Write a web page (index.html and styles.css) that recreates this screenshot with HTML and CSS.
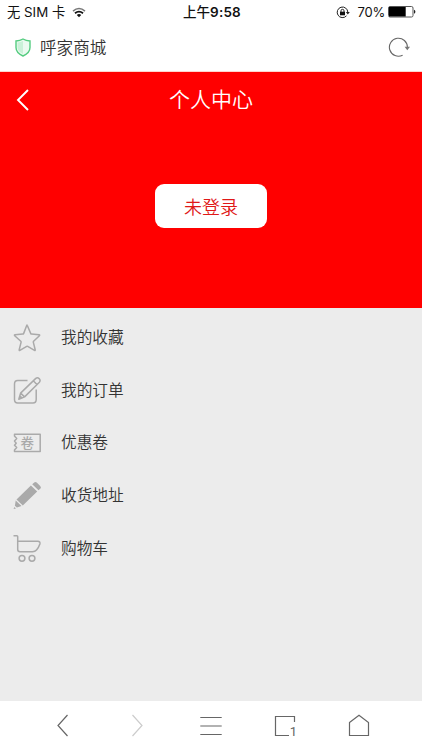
FILE: index.html
```html
<!DOCTYPE html>
<html lang="zh-CN">
<head>
<meta charset="utf-8">
<title>个人中心</title>
<link rel="stylesheet" href="styles.css">
</head>
<body>
<div class="screen">
  <header class="status">
    <div class="carrier"><span>无 SIM 卡</span>
      <svg width="14" height="11" viewBox="0 0 14 11" fill="none" stroke="#111"><path d="M1 4.1Q7-1 13 4.1" stroke="#777" stroke-width="1.5"/><path d="M3 6.3Q7 2.9 11 6.3" stroke-width="1.8"/><path d="M4.8 8Q7 6.2 9.2 8L7 10.3Z" fill="#111" stroke="none"/></svg>
    </div>
    <time class="clock">上午<span>9:58</span></time>
    <div class="power">
      <svg width="14" height="13" viewBox="0 0 14 13" fill="none" stroke="#222"><path d="M10.5 9.8A5.3 5.3 0 1 1 11.8 6.3"/><path d="M9.8 6h4l-2 2.4z" fill="#222" stroke="none"/><path d="M4 5.7h5v3.6H4z" fill="#111" stroke="none"/><path d="M5 6V4.8a1.5 1.5 0 0 1 3 0V6"/></svg>
      <span class="percent">70%</span>
      <svg width="28" height="12" viewBox="0 0 28 12"><rect x=".5" y=".5" width="24.5" height="10.5" rx="1.5" fill="#fff" stroke="#555"/><path d="M1 1h16.7v9.5H1z" fill="#000"/><path d="M26 3.7q1.4.3 1.4 2T26 7.8z" fill="#222"/></svg>
    </div>
  </header>
  <div class="address">
    <svg width="16" height="19" viewBox="0 0 16 19"><path d="M8 1Q11 2.9 15 3v6.5q0 5.3-7 8.5-7-3.2-7-8.5V3Q5 2.9 8 1z" fill="#eafaf0"/><path d="M8 3v13q-5.5-2.7-5.5-6.8V4.5Q5.7 4.3 8 3z" fill="#c9f1d8"/><path d="M8 1Q11 2.9 15 3v6.5q0 5.3-7 8.5-7-3.2-7-8.5V3Q5 2.9 8 1z" fill="none" stroke="#55cc80" stroke-width="1.4"/></svg>
    <span class="site">呼家商城</span>
    <svg class="reload" width="22" height="21" viewBox="0 0 22 21" fill="none" stroke="#666"><path d="M14.6 18.2A9 9 0 1 1 19.4 10.5v1.2" stroke-width="1.1"/><path d="M16.600 9.700h5.400l-2.700 3.500z" fill="#777" stroke="none"/></svg>
  </div>
  <section class="hero">
    <div class="titlebar">
      <svg width="14" height="24" viewBox="0 0 14 24" fill="none" stroke="#fff" stroke-width="1.9"><path d="M12 2 2 12l10 10"/></svg>
      <h1>个人中心</h1>
    </div>
    <button class="login">未登录</button>
  </section>
  <main class="list">
    <a class="row"><svg width="30" height="30" viewBox="0 0 30 30"><path d="m15.200 2.300 3.600 8.300q.2.500.8.500l7.500.7q1 .1.300.9l-5.800 5.500q-.4.400-.3.900l1.900 7.700q.2 1-.7.500l-6.800-4q-.5-.3-1 0l-6.800 4q-.9.500-.7-.5l1.900-7.700q.1-.5-.3-.9L2.700 12.700q-.7-.8.300-.9l7.800-.7q.6 0 .8-.5l3.200-8.300q.2-.5.400 0z"/></svg><span>我的收藏</span></a>
    <a class="row"><svg width="30" height="30" viewBox="0 0 30 30"><path d="M15.500 4.500H5.700Q2.500 4.500 2.500 8v15.500Q2.500 27 5.700 27h15.300q3.200 0 3.200-3.500V13.500"/><path d="m6.800 23.300 1.800-6.200L23.800 2.400q1.700-1.400 3.300.2 1.800 1.900.3 3.600L12.600 20.900zM21.300 4.800l3.600 3.700M8.600 17.100l4 3.800M7 23l3-1-1.900-1.900z"/></svg><span>我的订单</span></a>
    <a class="row"><svg width="30" height="30" viewBox="0 0 30 30"><path d="M2.500 5.200h25.700v17.300H2.500V21l2.200-2.500-2.200-2.300 1.700-2L2.500 12l2.200-2.500L2.500 7z"/><text x="8.500" y="18.800">卷</text></svg><span>优惠卷</span></a>
    <a class="row"><svg class="solid" width="30" height="30" viewBox="0 0 30 30"><path d="M18.900 4.500 25.200 10.500 10.800 24.400 4.500 18.400zM20.200 3.300l2-1.800q1.300-1 2.500.1l3.500 3.300q1.500 1.500.1 2.800L26.500 9.300zM3.700 19.500 9.500 25l-4.600 1.600-2-1.900zM2.300 26l1.700 1.500-2.400.6z"/></svg><span>收货地址</span></a>
    <a class="row"><svg width="30" height="30" viewBox="0 0 30 30"><path d="M1.500 1.700h3.300q.9 0 .9.900v12.900q0 2.200 2.300 2.200h12.500q2.500 0 4-1.700 2.300-2.700 3.400-6 .6-2.700-2.100-2.700H5.700"/><circle cx="10" cy="24.300" r="2.900"/><circle cx="20" cy="24.300" r="2.900"/></svg><span>购物车</span></a>
  </main>
  <nav class="toolbar">
    <svg width="24" height="24" viewBox="0 0 24 24"><path d="M16.500 1 7 11.500 16.500 22"/></svg>
    <svg class="disabled" width="24" height="24" viewBox="0 0 24 24"><path d="M7.500 1 17 11.500 7.500 22"/></svg>
    <svg width="24" height="24" viewBox="0 0 24 24"><path d="M1.300 3.500h21.400M1.300 12h21.400M1.300 20.500h21.400"/></svg>
    <svg width="24" height="24" viewBox="0 0 24 24"><path d="M21.500 8V2.500h-19v19h13.500"/><text x="16.800" y="22">1</text></svg>
    <svg width="24" height="24" viewBox="0 0 24 24"><path d="M2.500 8.500 12 1.200 21.500 8.500v13h-19z"/></svg>
  </nav>
</div>
</body>
</html>
```
FILE: styles.css
```css
* { box-sizing: border-box; }
body { margin: 0; }
.screen {
  width: 422px;
  height: 750px;
  display: flex;
  flex-direction: column;
  overflow: hidden;
  background: #ececec;
  color: #333;
  font-family: "Noto Sans CJK SC", sans-serif;
  font-weight: 350;
}
svg { display: block; flex: none; }
.status {
  height: 24px;
  flex: none;
  display: grid;
  grid-template-columns: 1fr auto 1fr;
  align-items: center;
  padding: 0 6px 0 7px;
  background: #fff;
  color: #111;
  font-family: Inter, "Noto Sans CJK SC", sans-serif;
  font-size: 13.3px;
  font-weight: 400;
  line-height: 24px;
}
.carrier, .power { display: flex; align-items: center; }
.carrier { gap: 7px; }
.clock { padding-left: 1px; font-weight: 500; font-size: 13.5px; }
.clock span { font-weight: 600; letter-spacing: .2px; }
.power { justify-content: flex-end; }
.percent { margin: 0 3px 0 7px; font-size: 13px; letter-spacing: -.2px; }
.address {
  height: 48px;
  flex: none;
  display: flex;
  align-items: center;
  padding: 0 12px 0 15px;
  background: #fff;
  border-bottom: 1px solid #ffd5cc;
}
.site { margin: 0 0 1px 9px; font-size: 16.6px; line-height: 24px; }
.reload { margin-left: auto; }
.hero {
  height: 236px;
  flex: none;
  display: flex;
  flex-direction: column;
  align-items: center;
  background: #f00;
}
.titlebar {
  width: 100%;
  height: 56px;
  display: grid;
  grid-template-columns: 14px 1fr 14px;
  align-items: center;
  padding: 0 16px;
}
h1 {
  margin: 0;
  padding-bottom: 4px;
  color: #fff;
  font-size: 21px;
  font-weight: 350;
  line-height: 30px;
  text-align: center;
}
.login {
  width: 112px;
  height: 44px;
  margin-top: 56px;
  padding: 0;
  border: 0;
  border-radius: 9px;
  background: #fff;
  color: #e01818;
  font: 350 18px/44px "Noto Sans CJK SC", sans-serif;
}
.list { flex: 1; padding-top: 3px; }
.row {
  height: 52.7px;
  display: flex;
  align-items: center;
  gap: 19px;
  padding-left: 12px;
  font-size: 15.7px;
  line-height: 24px;
}
.row span { margin-bottom: 1px; }
.row svg { margin-top: 2px; fill: none; stroke: #aaa; stroke-width: 1.5; stroke-linejoin: round; }
.row .solid { fill: #aaa; stroke: none; }
.row text { fill: #aaa; stroke: none; font-size: 13.5px; font-weight: 500; }
.toolbar {
  height: 49px;
  flex: none;
  display: flex;
  justify-content: space-between;
  align-items: center;
  padding: 0 51px;
  background: #fff;
}
.toolbar svg { fill: none; stroke: #666; stroke-width: 1.2; }
.toolbar .disabled { stroke: #ccc; }
.toolbar text { fill: #666; stroke: none; font: 13px Roboto, sans-serif; }
```
